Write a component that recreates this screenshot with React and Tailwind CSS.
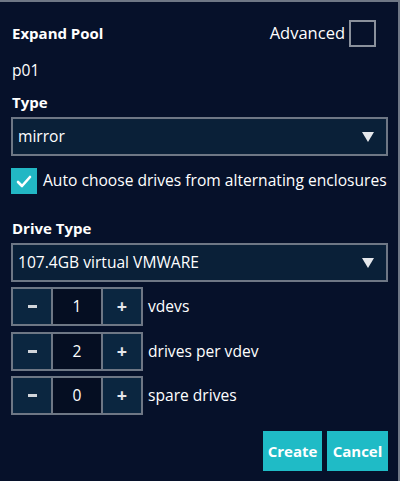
import React from "react";

const font = { fontFamily: '"Segoe UI", "Open Sans", "Noto Sans", sans-serif' };

function Arrow() {
  return (
    <svg width="12" height="10" viewBox="0 0 12 10" className="shrink-0">
      <path d="M0 0 L12 0 L6 10 Z" fill="#e5e7eb" />
    </svg>
  );
}

function Select({ value, className = "" }) {
  return (
    <div className={"flex items-center justify-between h-[39px] w-[377px] border-2 border-[#6e7785] bg-[#0a2038] pl-[5px] pr-[12px] text-[15.6px] text-white " + className}>
      <span>{value}</span>
      <Arrow />
    </div>
  );
}

function Stepper({ value, label, className = "" }) {
  return (
    <div className={"flex items-center " + className}>
      <div className="flex h-[39px] border-2 border-[#6e7785]">
        <div className="flex w-[38px] items-center justify-center bg-[#0b2640]">
          <div className="h-[3px] w-[9px] bg-[#d1d5db]" />
        </div>
        <div className="flex w-[52px] items-center justify-center border-x-2 border-[#6e7785] bg-[#050e22] text-[15.6px] text-white">{value}</div>
        <div className="flex w-[38px] items-center justify-center bg-[#0b2640] text-[18px] font-bold text-[#e5e7eb]">+</div>
      </div>
      <span className="ml-[5px] text-[15.6px] text-white">{label}</span>
    </div>
  );
}

export default function App() {
  return (
    <div style={font} className="w-[400px] h-[481px] bg-[#06112a] border-t-2 border-r-2 border-[#6e7785] pl-[11px] pt-[18px] text-white overflow-hidden">
      <div className="flex items-center justify-between h-[26px] pr-[22px]">
        <span className="pl-[1px] text-[15px] font-bold">Expand Pool</span>
        <div className="flex items-center">
          <span className="text-[16.5px] mr-[4px]">Advanced</span>
          <div className="w-[27px] h-[27px] border-2 border-[#8a919c]" />
        </div>
      </div>
      <div className="mt-[14px] pl-[1px] h-[20px] leading-[20px] text-[15.6px]">p01</div>
      <div className="mt-[12px] pl-[1px] h-[20px] leading-[20px] text-[15px] font-bold">Type</div>
      <Select value="mirror" className="mt-[5px]" />
      <div className="mt-[12px] flex items-center h-[26px]">
        <div className="flex h-[26px] w-[26px] items-center justify-center bg-[#22b7c4]">
          <svg width="16" height="13" viewBox="0 0 16 13">
            <path d="M2 7 L6 11 L14 2" stroke="white" strokeWidth="2.6" fill="none" strokeLinecap="round" strokeLinejoin="round" />
          </svg>
        </div>
        <span className="ml-[6px] text-[15.6px]">Auto choose drives from alternating enclosures</span>
      </div>
      <div className="mt-[24px] pl-[1px] h-[20px] leading-[20px] text-[15px] font-bold">Drive Type</div>
      <Select value="107.4GB virtual VMWARE" className="mt-[5px]" />
      <Stepper value="1" label="vdevs" className="mt-[5px]" />
      <Stepper value="2" label="drives per vdev" className="mt-[6px]" />
      <Stepper value="0" label="spare drives" className="mt-[5px]" />
      <div className="mt-[16px] flex justify-end gap-[5px] pr-[10px]">
        <button className="h-[40px] w-[59px] bg-[#1fbbc6] text-[15px] font-bold text-white">Create</button>
        <button className="h-[40px] w-[61px] bg-[#1fbbc6] text-[15px] font-bold text-white">Cancel</button>
      </div>
    </div>
  );
}
